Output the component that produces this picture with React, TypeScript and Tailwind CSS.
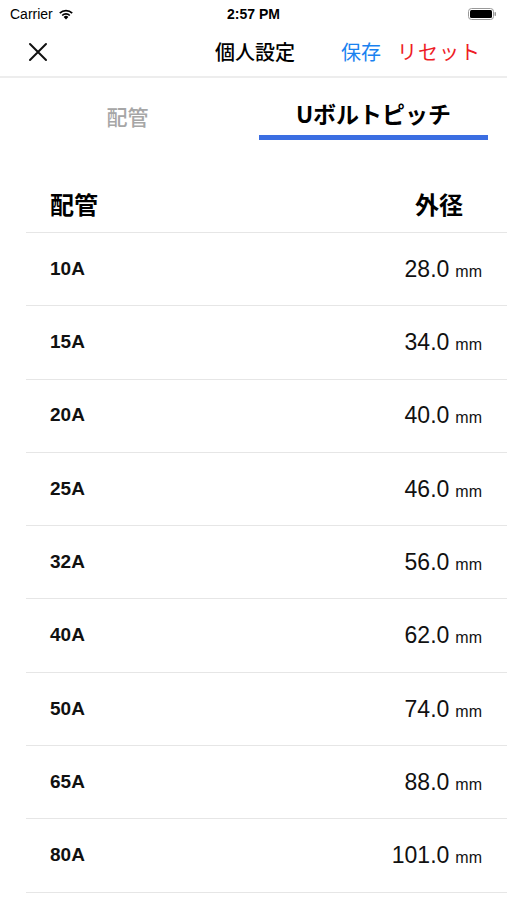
import React, { useState } from 'react';

const rows = [
  { size: '10A', od: '28.0' },
  { size: '15A', od: '34.0' },
  { size: '20A', od: '40.0' },
  { size: '25A', od: '46.0' },
  { size: '32A', od: '56.0' },
  { size: '40A', od: '62.0' },
  { size: '50A', od: '74.0' },
  { size: '65A', od: '88.0' },
  { size: '80A', od: '101.0' },
];

const jp = "font-['Noto_Sans_CJK_JP',sans-serif]";
const latin = "font-['Liberation_Sans','Noto_Sans_CJK_JP',sans-serif]";

const StatusBar = () => (
  <div className={`h-[28px] flex items-center justify-between px-[10px] ${latin}`}>
    <div className="flex items-center gap-[5px] w-[120px]">
      <span className="text-[14px] text-black">Carrier</span>
      {/* wifi */}
      <svg width="16" height="12" viewBox="0 0 16 12">
        <path d="M8 11.5 L5.6 8.9 A3.4 3.4 0 0 1 10.4 8.9 Z" fill="#000" />
        <path d="M3.6 6.9 A6.3 6.3 0 0 1 12.4 6.9 L11.2 8.1 A4.6 4.6 0 0 0 4.8 8.1 Z" fill="#000" />
        <path d="M1.2 4.5 A9.7 9.7 0 0 1 14.8 4.5 L13.6 5.7 A8 8 0 0 0 2.4 5.7 Z" fill="#000" />
      </svg>
    </div>
    <span className="text-[14px] font-bold text-black">2:57 PM</span>
    <div className="w-[120px] flex justify-end">
      {/* battery */}
      <svg width="29" height="12" viewBox="0 0 29 12">
        <rect x="0.5" y="0.5" width="25" height="11" rx="3" fill="none" stroke="#999" />
        <rect x="2" y="2" width="22" height="8" rx="1.5" fill="#000" />
        <rect x="26.5" y="4" width="1.5" height="4" rx="0.7" fill="#999" />
      </svg>
    </div>
  </div>
);

const App = () => {
  const [tab, setTab] = useState(1);

  return (
    <div className="w-[507px] h-[900px] overflow-hidden bg-white">
      <StatusBar />

      {/* Nav bar */}
      <div className="h-[50px] flex items-center border-b-2 border-[#ededed]">
        <button className="w-[75px] flex justify-center">
          <svg width="20" height="20" viewBox="0 0 20 20">
            <path d="M2 2 L18 18 M18 2 L2 18" stroke="#111" strokeWidth="2" strokeLinecap="round" />
          </svg>
        </button>
        <div className={`flex-1 flex justify-end pr-[46px] text-[20px] font-medium text-black ${jp}`}>
          個人設定
        </div>
        <div className={`flex items-center gap-[16px] pr-[26px] text-[20px] ${jp}`}>
          <button className="text-[#1a82f0]">保存</button>
          <button className="text-[#ee1c25] tracking-[1px]">リセット</button>
        </div>
      </div>

      {/* Tabs */}
      <div className={`flex h-[62px] ${jp}`}>
        <button
          onClick={() => setTab(0)}
          className={`w-[255px] flex items-end justify-center pb-[8px] text-[21px] font-medium ${tab === 0 ? 'text-black border-b-[5px] border-[#3b6ee2]' : 'text-[#a6a6a6]'}`}
        >
          配管
        </button>
        <button
          onClick={() => setTab(1)}
          className={`w-[229px] ml-[4px] flex items-end justify-center pb-[5px] text-[23px] font-bold ${tab === 1 ? 'text-black border-b-[5px] border-[#3b6ee2]' : 'text-[#a6a6a6]'}`}
        >
          Uボルトピッチ
        </button>
      </div>

      {/* Table */}
      <div className="ml-[26px] mt-[12px]">
        <div className={`h-[81px] flex items-center justify-between pl-[24px] pr-[44px] pt-[24px] border-b border-[#e6e6e6] text-[24px] font-bold text-black ${jp}`}>
          <span>配管</span>
          <span>外径</span>
        </div>
        {rows.map((r) => (
          <div
            key={r.size}
            className="h-[73.3px] flex items-center justify-between pl-[24px] pr-[25px] border-b border-[#e6e6e6]"
          >
            <span className={`text-[19px] font-bold text-[#111] ${latin}`}>{r.size}</span>
            <span className={`flex items-baseline gap-[6px] text-[#111] ${latin}`}>
              <span className="text-[23px]">{r.od}</span>
              <span className="text-[16px]">mm</span>
            </span>
          </div>
        ))}
      </div>
    </div>
  );
};

export default App;
